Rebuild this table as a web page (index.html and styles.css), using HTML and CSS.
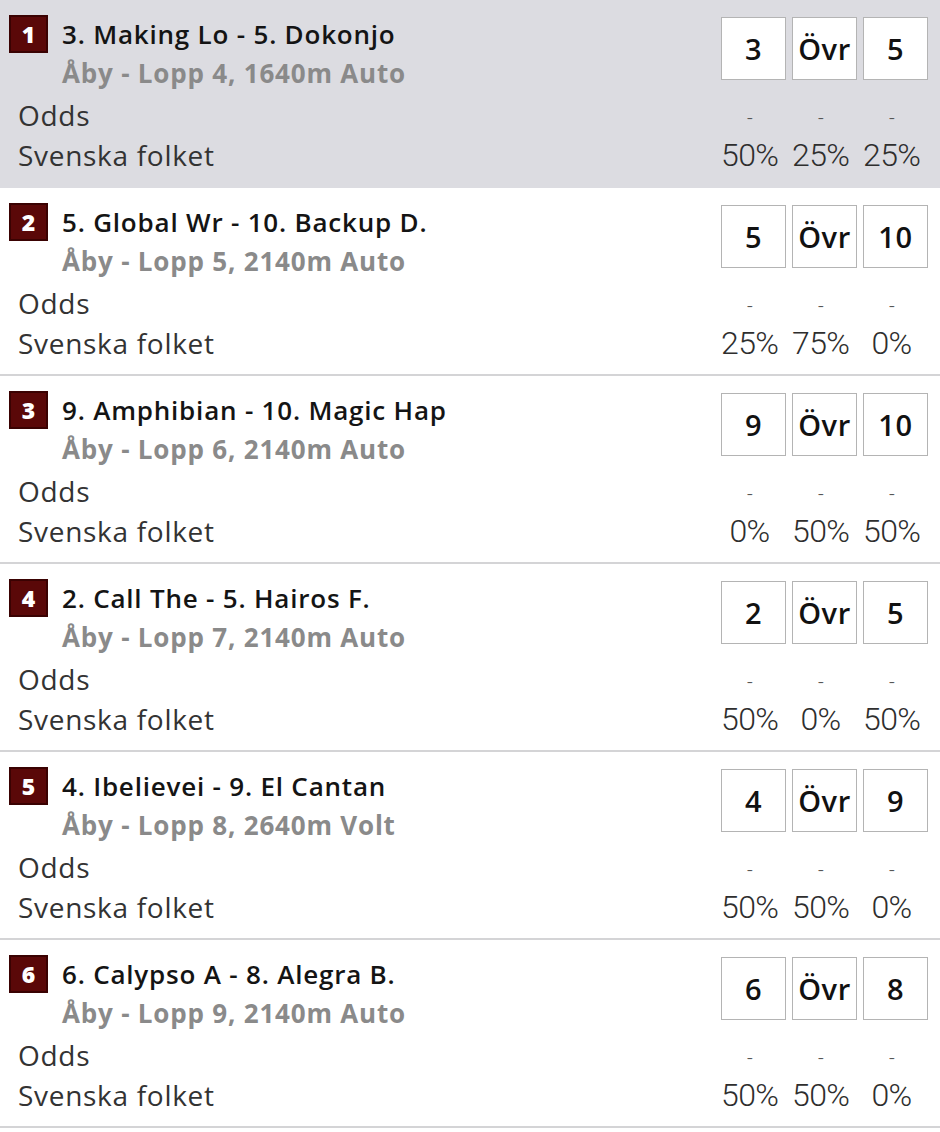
FILE: index.html
```html
<!DOCTYPE html>
<html lang="sv">
<head>
<meta charset="utf-8">
<link rel="stylesheet" href="styles.css">
</head>
<body>
<div class="list">
  <div class="race active">
    <div class="left">
      <div class="head">
        <span class="badge">1</span>
        <div class="names">
          <div class="title">3. Making Lo - 5. Dokonjo</div>
          <div class="sub">Åby - Lopp 4, 1640m Auto</div>
        </div>
      </div>
      <div class="label">Odds</div>
      <div class="label">Svenska folket</div>
    </div>
    <div class="right">
      <div class="boxes"><span class="box">3</span><span class="box">Övr</span><span class="box">5</span></div>
      <div class="vals dash"><span>-</span><span>-</span><span>-</span></div>
      <div class="vals"><span>50%</span><span>25%</span><span>25%</span></div>
    </div>
  </div>
  <div class="race">
    <div class="left">
      <div class="head">
        <span class="badge">2</span>
        <div class="names">
          <div class="title">5. Global Wr - 10. Backup D.</div>
          <div class="sub">Åby - Lopp 5, 2140m Auto</div>
        </div>
      </div>
      <div class="label">Odds</div>
      <div class="label">Svenska folket</div>
    </div>
    <div class="right">
      <div class="boxes"><span class="box">5</span><span class="box">Övr</span><span class="box">10</span></div>
      <div class="vals dash"><span>-</span><span>-</span><span>-</span></div>
      <div class="vals"><span>25%</span><span>75%</span><span>0%</span></div>
    </div>
  </div>
  <div class="race">
    <div class="left">
      <div class="head">
        <span class="badge">3</span>
        <div class="names">
          <div class="title">9. Amphibian - 10. Magic Hap</div>
          <div class="sub">Åby - Lopp 6, 2140m Auto</div>
        </div>
      </div>
      <div class="label">Odds</div>
      <div class="label">Svenska folket</div>
    </div>
    <div class="right">
      <div class="boxes"><span class="box">9</span><span class="box">Övr</span><span class="box">10</span></div>
      <div class="vals dash"><span>-</span><span>-</span><span>-</span></div>
      <div class="vals"><span>0%</span><span>50%</span><span>50%</span></div>
    </div>
  </div>
  <div class="race">
    <div class="left">
      <div class="head">
        <span class="badge">4</span>
        <div class="names">
          <div class="title">2. Call The - 5. Hairos F.</div>
          <div class="sub">Åby - Lopp 7, 2140m Auto</div>
        </div>
      </div>
      <div class="label">Odds</div>
      <div class="label">Svenska folket</div>
    </div>
    <div class="right">
      <div class="boxes"><span class="box">2</span><span class="box">Övr</span><span class="box">5</span></div>
      <div class="vals dash"><span>-</span><span>-</span><span>-</span></div>
      <div class="vals"><span>50%</span><span>0%</span><span>50%</span></div>
    </div>
  </div>
  <div class="race">
    <div class="left">
      <div class="head">
        <span class="badge">5</span>
        <div class="names">
          <div class="title">4. Ibelievei - 9. El Cantan</div>
          <div class="sub">Åby - Lopp 8, 2640m Volt</div>
        </div>
      </div>
      <div class="label">Odds</div>
      <div class="label">Svenska folket</div>
    </div>
    <div class="right">
      <div class="boxes"><span class="box">4</span><span class="box">Övr</span><span class="box">9</span></div>
      <div class="vals dash"><span>-</span><span>-</span><span>-</span></div>
      <div class="vals"><span>50%</span><span>50%</span><span>0%</span></div>
    </div>
  </div>
  <div class="race">
    <div class="left">
      <div class="head">
        <span class="badge">6</span>
        <div class="names">
          <div class="title">6. Calypso A - 8. Alegra B.</div>
          <div class="sub">Åby - Lopp 9, 2140m Auto</div>
        </div>
      </div>
      <div class="label">Odds</div>
      <div class="label">Svenska folket</div>
    </div>
    <div class="right">
      <div class="boxes"><span class="box">6</span><span class="box">Övr</span><span class="box">8</span></div>
      <div class="vals dash"><span>-</span><span>-</span><span>-</span></div>
      <div class="vals"><span>50%</span><span>50%</span><span>0%</span></div>
    </div>
  </div>
</div>
</body>
</html>
```

FILE: styles.css
```css
html, body {
  margin: 0;
  padding: 0;
  background: #ffffff;
}

body {
  font-family: "Open Sans", "Liberation Sans", sans-serif;
  color: #2a2a2a;
}

.list {
  display: flex;
  flex-direction: column;
}

.race {
  display: flex;
  justify-content: space-between;
  height: 186px;
  border-bottom: 2px solid #d4d4d6;
  background: #ffffff;
}

.race.active {
  background: #dcdce1;
  border-bottom-color: #dcdce1;
}

.left {
  display: flex;
  flex-direction: column;
  padding-top: 15px;
}

.head {
  display: flex;
  align-items: flex-start;
  padding-left: 9px;
  margin-bottom: 3px;
}

.badge {
  box-sizing: border-box;
  width: 39px;
  height: 38px;
  background: #5a0808;
  border: 2px solid #3a0202;
  color: #ffffff;
  font-weight: 800;
  font-size: 23px;
  line-height: 34px;
  text-align: center;
}

.names {
  margin-left: 14px;
  display: flex;
  flex-direction: column;
}

.title {
  font-weight: 600;
  font-size: 26px;
  line-height: 40px;
  margin-top: -1px;
  letter-spacing: 0.8px;
  color: #141414;
}

.sub {
  font-weight: 700;
  font-size: 26px;
  line-height: 38px;
  letter-spacing: 0.8px;
  color: #8a8a8a;
}

.label {
  padding-left: 18px;
  font-size: 28px;
  line-height: 40px;
  color: #333333;
  font-weight: 400;
  letter-spacing: 0.7px;
}

.right {
  display: flex;
  flex-direction: column;
  padding-top: 17px;
  padding-right: 12px;
}

.boxes {
  display: flex;
  gap: 6px;
  margin-bottom: 18px;
}

.box {
  box-sizing: border-box;
  width: 65px;
  height: 63px;
  background: #ffffff;
  border: 1px solid #b4b4b4;
  display: flex;
  align-items: center;
  justify-content: center;
  font-weight: 600;
  font-size: 29px;
  letter-spacing: 0.6px;
  color: #111111;
}

.vals {
  display: flex;
  gap: 6px;
}

.vals span {
  box-sizing: border-box;
  width: 65px;
  padding-right: 8px;
  text-align: center;
  font-family: Roboto, "Liberation Sans", sans-serif;
  font-weight: 300;
  font-size: 32px;
  line-height: 40px;
  color: #2e2e2e;
  letter-spacing: -0.6px;
  white-space: nowrap;
}

.vals.dash span {
  font-size: 20px;
  color: #555555;
}

.vals:last-child {
  margin-top: -3px;
}
```
